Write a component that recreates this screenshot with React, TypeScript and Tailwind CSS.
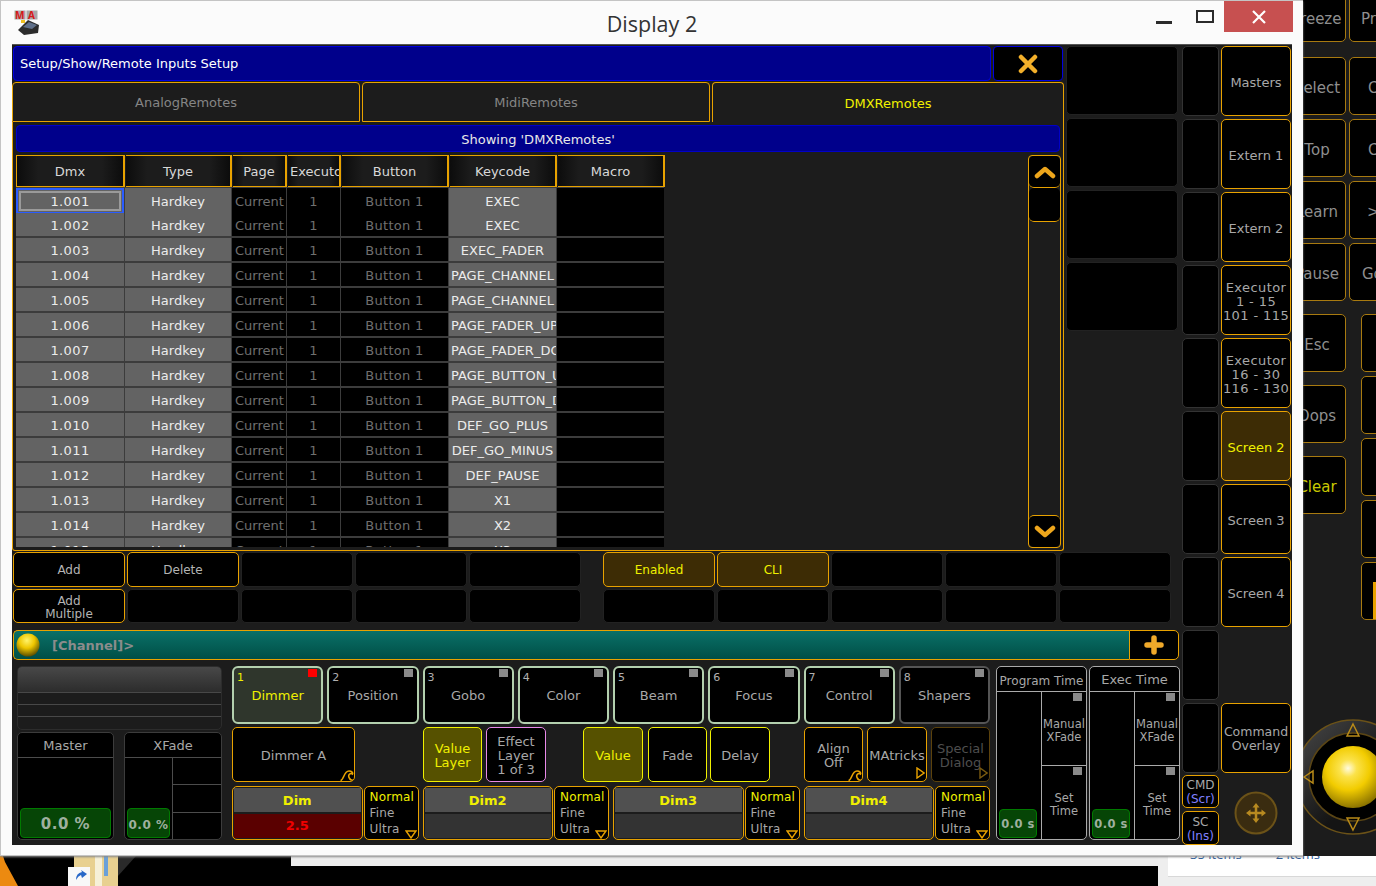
import type { ReactNode } from "react";

const ORANGE = "#e8a200";

const keycodes = [
  "EXEC", "EXEC", "EXEC_FADER", "PAGE_CHANNEL", "PAGE_CHANNEL", "PAGE_FADER_UP", "PAGE_FADER_DOWN",
  "PAGE_BUTTON_UP", "PAGE_BUTTON_DOWN", "DEF_GO_PLUS", "DEF_GO_MINUS", "DEF_PAUSE", "X1", "X2", "X3",
];

const features = ["Dimmer", "Position", "Gobo", "Color", "Beam", "Focus", "Control", "Shapers"];

// Small rounded softkey
function Key({ className = "", children }: { className?: string; children?: ReactNode }) {
  return (
    <div className={`relative flex items-center justify-center text-center leading-[14px] rounded-[5px] bg-black overflow-hidden shrink-0 ${className}`}>
      {children}
    </div>
  );
}

function Wave() {
  return (
    <svg className="absolute right-0 bottom-0" width="14" height="11" viewBox="0 0 14 11" fill="none" stroke={ORANGE} strokeWidth="1.6">
      <path d="M0.5 10.5 C4 10.5 3.5 1 9 1 C12 1 13 3 12.5 4 C10 2.5 8 5 9 7.5 C9.5 9 11 10.5 13.5 10.5" />
    </svg>
  );
}

function TriDown() {
  return (
    <svg className="absolute right-[1px] bottom-[0px]" width="12" height="9" viewBox="0 0 12 9" fill="none" stroke={ORANGE} strokeWidth="1.4">
      <path d="M1 1 H11 L6 8 Z" />
    </svg>
  );
}

function TriRight({ color = ORANGE }: { color?: string }) {
  return (
    <svg className="absolute right-[1px] bottom-[2px]" width="9" height="12" viewBox="0 0 9 12" fill="none" stroke={color} strokeWidth="1.4">
      <path d="M1 1 V11 L8 6 Z" />
    </svg>
  );
}

function Corner({ className = "bg-[#8a8a8a]" }: { className?: string }) {
  return <div className={`absolute right-[4px] top-[1px] w-[9px] h-[8px] ${className}`} />;
}

function TableRow({ index }: { index: number }) {
  const dmx = `1.${String(index + 1).padStart(3, "0")}`;
  const first = index === 0;
  return (
    <div className="grid grid-cols-[108px_106px_54px_53px_107px_107px_107px] gap-x-[1px] h-[25px] pb-[2px] text-[13px]">
      <div className={`flex items-center justify-center pt-[2px] bg-[#636363] text-[#ececec] tracking-[0.4px] ${first ? "border-[2px] border-[#2a5cff] outline-[2px] outline -outline-offset-[5px] outline-[#9a9a9a]" : ""}`}>{dmx}</div>
      <div className="flex items-center justify-center pt-[2px] bg-[#636363] text-[#ececec]">Hardkey</div>
      <div className="flex items-center pt-[2px] pl-[3px] bg-black text-[#6f6f6f] overflow-hidden whitespace-nowrap">Current</div>
      <div className="flex items-center justify-center pt-[2px] bg-black text-[#6f6f6f]">1</div>
      <div className="flex items-center justify-center pt-[2px] bg-black text-[#6f6f6f] tracking-[0.3px]">Button 1</div>
      <div className="flex items-center justify-center pt-[2px] bg-[#636363] text-[#ececec] overflow-hidden whitespace-nowrap">
        <span className={keycodes[index].length > 12 ? "self-center w-full pl-[2px] overflow-hidden" : ""}>{keycodes[index]}</span>
      </div>
      <div className="bg-black" />
    </div>
  );
}

function Header({ children }: { children: ReactNode }) {
  return (
    <div className="flex items-center justify-center h-[32px] pt-[2px] overflow-hidden whitespace-nowrap text-[#d8d8d8] text-[13px] border-t-[1px] border-b-[1px] border-r-[2px] border-[#e8a200] bg-[linear-gradient(90deg,#0c0c0c,#1c1c1c_20%,#1c1c1c_80%,#0c0c0c)]">
      {children}
    </div>
  );
}

function Popup() {
  return (
    <div className="w-[1052px] h-[506px] flex flex-col shrink-0">
      <div className="flex h-[35px] mt-[1px] gap-[2px] mr-[1px] ml-[1px]">
        <div className="flex-1 flex items-center pl-[6px] rounded-[4px] bg-[#00008b] border border-[#0000e0] text-white text-[13px]">
          Setup/Show/Remote Inputs Setup
        </div>
        <div className="w-[70px] flex items-center justify-center rounded-[4px] bg-black border border-[#0000e0]">
          <svg width="20" height="20" viewBox="0 0 20 20" fill="none" stroke="#f3b02a" strokeWidth="4.5" strokeLinecap="round">
            <path d="M3 3 L17 17 M17 3 L3 17" />
          </svg>
        </div>
      </div>
      <div className="flex h-[40px] mt-[1px] gap-[2px] text-[13px]">
        <div className="w-[348px] flex items-center justify-center pt-[2px] rounded-t-[4px] bg-[#1c1c1c] border border-[#e8a200] text-[#858585]">AnalogRemotes</div>
        <div className="w-[348px] flex items-center justify-center pt-[2px] rounded-t-[4px] bg-[#1c1c1c] border border-[#e8a200] text-[#858585]">MidiRemotes</div>
        <div className="flex-1 flex items-center justify-center pt-[2px] rounded-t-[4px] bg-[#1c1c1c] border border-b-0 border-[#e8a200] text-[#f0f000]">DMXRemotes</div>
      </div>
      <div className="flex-1 min-h-0 flex flex-col px-[3px] pt-[3px] border border-t-0 border-[#e8a200] rounded-b-[3px] bg-[#1c1c1c]">
        <div className="h-[27px] shrink-0 flex items-center justify-center pt-[2px] rounded-[4px] bg-[#00008b] border border-[#0000c8] text-[#e8e8e8] text-[13px]">
          Showing 'DMXRemotes'
        </div>
        <div className="flex flex-1 min-h-0 mt-[3px]">
          <div className="w-[648px] flex flex-col">
            <div className="grid grid-cols-[108px_106px_54px_53px_107px_107px_107px] gap-x-[1px] border-l border-[#e8a200]">
              <Header>Dmx</Header>
              <Header>Type</Header>
              <Header>Page</Header>
              <Header><span className="pl-[2px] w-full">Executor</span></Header>
              <Header>Button</Header>
              <Header>Keycode</Header>
              <Header>Macro</Header>
            </div>
            <div className="h-[360px] pt-[1px] overflow-hidden bg-[#3c3c3c]">
              {keycodes.map((_, i) => (
                <TableRow key={i} index={i} />
              ))}
            </div>
          </div>
          <div className="ml-auto -mr-[1px] w-[33px] flex flex-col h-[393px] border border-[#e8a200] rounded-[4px]">
            <Key className="w-full h-[32px] border-b border-[#e8a200]">
              <svg width="22" height="14" viewBox="0 0 22 14" fill="none" stroke="#eda61c" strokeWidth="4.5" strokeLinecap="round" strokeLinejoin="round">
                <path d="M3 11 L11 4 L19 11" />
              </svg>
            </Key>
            <Key className="w-full h-[34px] border-b border-[#e8a200]" />
            <div className="flex-1 bg-[#1c1c1c]" />
            <Key className="w-full h-[32px] border-t border-[#e8a200]">
              <svg width="22" height="14" viewBox="0 0 22 14" fill="none" stroke="#eda61c" strokeWidth="4.5" strokeLinecap="round" strokeLinejoin="round">
                <path d="M3 3 L11 10 L19 3" />
              </svg>
            </Key>
          </div>
        </div>
      </div>
    </div>
  );
}

function KeyRows() {
  const on = "w-[112px] border border-[#e8a200] text-[#b4b4b4] text-[12px]";
  const off = "w-[112px] border border-[#222222]";
  const lit = "w-[112px] border border-[#e8a200] !bg-[#3d2c05] text-[#f0f000] text-[12px]";
  return (
    <div className="ml-[1px] mt-[1px] flex flex-col gap-[2px]">
      <div className="flex gap-[2px] h-[35px]">
        <Key className={on}>Add</Key>
        <Key className={on}>Delete</Key>
        <Key className={off} />
        <Key className={off} />
        <Key className={off} />
        <div className="w-[18px]" />
        <Key className={lit}>Enabled</Key>
        <Key className={lit}>CLI</Key>
        <Key className={off} />
        <Key className={off} />
        <Key className={off} />
      </div>
      <div className="flex gap-[2px] h-[34px]">
        <Key className={`${on} pt-[4px] !leading-[13px]`}>Add<br />Multiple</Key>
        <Key className={off} />
        <Key className={off} />
        <Key className={off} />
        <Key className={off} />
        <div className="w-[18px]" />
        <Key className={off} />
        <Key className={off} />
        <Key className={off} />
        <Key className={off} />
        <Key className={off} />
      </div>
    </div>
  );
}

function CommandLine() {
  return (
    <div className="ml-[1px] mt-[7px] flex h-[30px]">
      <div className="w-[1116px] flex items-center rounded-l-[5px] border-y border-l border-[#e8a200] bg-[linear-gradient(180deg,#0a7068,#004f46)]">
        <svg className="ml-[2px]" width="24" height="24" viewBox="0 0 24 24">
          <defs>
            <radialGradient id="ballSmall" cx="0.45" cy="0.3" r="0.75">
              <stop offset="0" stopColor="#fff36a" />
              <stop offset="0.45" stopColor="#eec600" />
              <stop offset="1" stopColor="#4a3f00" />
            </radialGradient>
          </defs>
          <circle cx="12" cy="12" r="11.5" fill="url(#ballSmall)" />
        </svg>
        <span className="ml-[12px] pt-[2px] text-[13px] font-bold text-[#8c8c8c]">[Channel]&gt;</span>
      </div>
      <Key className="w-[50px] border border-[#e8a200] rounded-l-none">
        <svg width="20" height="20" viewBox="0 0 20 20" fill="none" stroke="#f0a92a" strokeWidth="5.5" strokeLinecap="round">
          <path d="M10 3 V17 M3 10 H17" />
        </svg>
      </Key>
    </div>
  );
}

function GreenValue({ className, children }: { className: string; children: ReactNode }) {
  return (
    <div className={`absolute flex items-center justify-center pt-[3px] rounded-[4px] border border-[#007a00] bg-[#064506] text-[#9fb09f] font-bold tracking-[0.5px] ${className}`}>
      {children}
    </div>
  );
}

function MasterBlock() {
  return (
    <div className="w-[205px] shrink-0 ml-[5px]">
      <div className="h-[64px] rounded-[5px] bg-[#1c1c1c] border border-[#2c2c2c] overflow-hidden">
        <div className="h-[26px] bg-[linear-gradient(180deg,#484848,#2c2c2c)] border-b border-[#484848]" />
        <div className="h-[12px] border-b border-[#484848]" />
        <div className="h-[12px] border-b border-[#484848]" />
      </div>
      <div className="flex gap-[10px] mt-[2px] h-[108px]">
        <div className="w-[97px] flex flex-col rounded-[5px] border border-[#3c3c3c] bg-black overflow-hidden">
          <div className="h-[25px] flex items-center justify-center pt-[2px] border-b border-[#4c4c4c] text-[#a8a8a8] text-[13px]">Master</div>
          <div className="relative flex-1">
            <GreenValue className="left-[2px] right-[2px] bottom-[1px] h-[30px] text-[15px]">0.0 %</GreenValue>
          </div>
        </div>
        <div className="w-[98px] flex flex-col rounded-[5px] border border-[#3c3c3c] bg-black overflow-hidden">
          <div className="h-[25px] flex items-center justify-center pt-[2px] border-b border-[#4c4c4c] text-[#a8a8a8] text-[13px]">XFade</div>
          <div className="flex flex-1">
            <div className="relative w-[48px] border-r border-[#4c4c4c]">
              <GreenValue className="left-[2px] right-[2px] bottom-[1px] h-[30px] text-[12px]">0.0 %</GreenValue>
            </div>
            <div className="flex-1 flex flex-col">
              <div className="flex-1 border-b border-[#4c4c4c]" />
              <div className="flex-1 border-b border-[#4c4c4c]" />
              <div className="flex-1" />
            </div>
          </div>
        </div>
      </div>
    </div>
  );
}

function FeatureButton({ n, label, selected }: { n: number; label: string; selected: boolean }) {
  return (
    <Key className={`h-[58px] border-[2px] ${n === 8 ? "border-[#555555]" : "border-[#b3d0ae]"} ${selected ? "!bg-[#2f362c] text-[#f0f000]" : "text-[#a8a8a8]"} text-[13px] rounded-[6px]`}>
      <span className={`absolute left-[3px] top-[3px] text-[11px] ${selected ? "text-[#f0f000]" : "text-[#b0b0b0]"}`}>{n}</span>
      <Corner className={selected ? "bg-[#ff0000]" : "bg-[#8a8a8a]"} />
      <span className="mt-[1px]">{label}</span>
    </Key>
  );
}

function Encoder({ label, value }: { label: string; value?: string }) {
  return (
    <div className="flex gap-[1px]">
      <div className="flex-1 flex flex-col rounded-[5px] border border-[#e8a200] bg-[#1c1c1c] p-[1px] overflow-hidden">
        <div className="h-[24px] flex items-center justify-center pt-[2px] bg-[#505050] text-[#f0f000] font-bold text-[13px]">{label}</div>
        <div className={`flex-1 mt-[2px] flex items-center justify-center font-bold text-[13px] text-[#f00000] ${value ? "bg-[#5a0000]" : "bg-[#333333]"}`}>{value}</div>
      </div>
      <Key className="w-[55px] h-[54px] border border-[#e8a200] !justify-start pl-[5px] text-[12px] tracking-[0.2px] leading-[16px] text-left">
        <div className="text-[#a8a8a8]">
          <div className="text-[#f0f000]">Normal</div>
          <div>Fine</div>
          <div>Ultra</div>
        </div>
        <TriDown />
      </Key>
    </div>
  );
}

function Features() {
  const yel = "h-[55px] pt-[2px] border-[1.5px] border-[#f0f000] text-[#a8a8a8] text-[13px]";
  const org = "h-[55px] pt-[2px] border border-[#e8a200] text-[#a8a8a8] text-[13px]";
  return (
    <div className="w-[758px] shrink-0 ml-[10px]">
      <div className="grid grid-cols-8 gap-[4px]">
        {features.map((f, i) => (
          <FeatureButton key={f} n={i + 1} label={f} selected={i === 0} />
        ))}
      </div>
      <div className="flex mt-[3px]">
        <Key className="w-[123px] h-[55px] pt-[2px] border border-[#e8a200] text-[#a8a8a8] text-[13px]">
          Dimmer A
          <Wave />
        </Key>
        <Key className={`ml-[68px] w-[59px] ${yel} !bg-[#565100] !text-[#f0f000]`}>Value<br />Layer</Key>
        <Key className="ml-[4px] w-[60px] h-[55px] pt-[2px] border-[1.5px] border-[#e889e8] text-[#a8a8a8] text-[13px]">Effect<br />Layer<br />1 of 3</Key>
        <Key className={`ml-[37px] w-[60px] ${yel} !bg-[#565100] !text-[#f0f000]`}>Value</Key>
        <Key className={`ml-[5px] w-[59px] ${yel}`}>Fade</Key>
        <Key className={`ml-[3px] w-[60px] ${yel}`}>Delay</Key>
        <Key className={`ml-[34px] w-[59px] ${org}`}>Align<br />Off<Wave /></Key>
        <Key className={`ml-[4px] w-[60px] ${org}`}>MAtricks<TriRight /></Key>
        <Key className="ml-[4px] w-[59px] h-[55px] pt-[2px] border border-[#5c420c] text-[#4e4e4e] text-[13px]">Special<br />Dialog<TriRight color="#7a5a10" /></Key>
      </div>
      <div className="grid grid-cols-4 gap-[4px] mt-[4px]">
        <Encoder label="Dim" value="2.5" />
        <Encoder label="Dim2" />
        <Encoder label="Dim3" />
        <Encoder label="Dim4" />
      </div>
    </div>
  );
}

function TimePanel({ title, small }: { title: string; small?: boolean }) {
  return (
    <div className="w-[91px] h-[174px] flex flex-col rounded-[5px] border border-[#aaaaaa] bg-black overflow-hidden text-[#a8a8a8]">
      <div className={`h-[25px] shrink-0 flex items-center justify-center border-b border-[#aaaaaa] whitespace-nowrap ${small ? "text-[12px] pt-[3px]" : "text-[13px] pt-[2px]"}`}>{title}</div>
      <div className="flex flex-1">
        <div className="relative w-[45px] border-r border-[#aaaaaa]">
          <GreenValue className="left-[2px] right-[4px] bottom-[1px] h-[29px] text-[11.5px]">0.0 s</GreenValue>
        </div>
        <div className="flex-1 flex flex-col text-[11.5px] leading-[13px] text-center">
          <div className="relative h-[74px] flex items-center justify-center border-b border-[#aaaaaa] pt-[5px]">
            <Corner />
            <span>Manual<br />XFade</span>
          </div>
          <div className="relative flex-1 flex items-center justify-center pt-[4px]">
            <Corner />
            <span>Set<br />Time</span>
          </div>
        </div>
      </div>
    </div>
  );
}

function RightColumns() {
  const views = ["Masters", "Extern 1", "Extern 2", "Executor\n1 - 15\n101 - 115", "Executor\n16 - 30\n116 - 130", "Screen 2", "Screen 3", "Screen 4"];
  return (
    <div className="flex gap-[2px] ml-[2px] pt-[1px]">
      <div className="w-[37px] flex flex-col gap-[3px]">
        {Array.from({ length: 10 }).map((_, i) => (
          <Key key={i} className="w-full h-[70px] border border-[#333333]" />
        ))}
        <Key className="w-full h-[33px] -mt-[1px] border border-[#e8a200] text-[12px] text-[#a8a8a8]">
          <span>CMD<br /><span className="text-[#8080ff]">(Scr)</span></span>
        </Key>
        <Key className="w-full h-[34px] pt-[2px] border border-[#e8a200] text-[12px] text-[#a8a8a8]">
          <span>SC<br /><span className="text-[#8080ff]">(Ins)</span></span>
        </Key>
      </div>
      <div className="w-[70px] flex flex-col gap-[3px]">
        {views.map((v) => (
          <Key
            key={v}
            className={`w-full h-[70px] pt-[4px] border border-[#e8a200] text-[13px] whitespace-pre ${v === "Screen 2" ? "!bg-[#3d2c05] text-[#f0f000]" : "text-[#a8a8a8]"} ${v.includes("- 1") ? "tracking-[0.4px]" : ""}`}
          >
            {v}
          </Key>
        ))}
        <div className="h-[70px]" />
        <Key className="w-full h-[70px] pt-[2px] border border-[#e8a200] text-[12.5px] text-[#a8a8a8]">Command<br />Overlay</Key>
        <div className="flex justify-center pt-[15px]">
          <svg width="44" height="44" viewBox="0 0 44 44" fill="none">
            <circle cx="22" cy="22" r="20.5" fill="#3a2c10" stroke="#6b5218" strokeWidth="2" />
            <path d="M22 15 V29 M15 22 H29" stroke="#b88a20" strokeWidth="2.5" />
            <path d="M22 12 L25.5 16.5 H18.5 Z M22 32 L25.5 27.5 H18.5 Z M12 22 L16.5 18.5 V25.5 Z M32 22 L27.5 18.5 V25.5 Z" fill="#b88a20" />
          </svg>
        </div>
      </div>
    </div>
  );
}

function MainWindow() {
  return (
    <div className="absolute left-0 top-0 w-[1303px] h-[856px] flex flex-col bg-[#fbfbfb] border-t border-l border-[#c4c4c4] border-b-[1px] shadow-[0_1px_2px_#888888]">
      <div className="relative h-[43px] shrink-0 flex items-center justify-center">
        <svg className="absolute left-[13px] top-[9px]" width="26" height="26" viewBox="0 0 26 26">
          <rect x="0.5" y="0.5" width="11" height="9" fill="#a8a8a8" />
          <rect x="12.5" y="0.5" width="11" height="9" fill="#a8a8a8" />
          <text x="1" y="9" fontSize="10" fontWeight="bold" fill="#d81818">M</text>
          <text x="14" y="9" fontSize="10" fontWeight="bold" fill="#d81818">A</text>
          <path d="M4 20 L14 10 L25 15 L24 23 L10 25 Z" fill="#2c2c2c" />
          <path d="M9 17 L15 12 L23 15 L18 19 Z" fill="#60708a" />
          <rect x="7" y="10" width="4" height="3" fill="#f0c020" />
        </svg>
        <span className="text-[21.5px] pt-[4px] text-[#333333] [font-family:'Open_Sans',sans-serif]">Display 2</span>
        <div className="absolute left-[1155px] top-[20px] w-[16px] h-[3px] bg-[#2b2b2b]" />
        <div className="absolute left-[1195px] top-[9px] w-[18px] h-[13px] border-[2px] border-[#2b2b2b]" />
        <div className="absolute left-[1223px] top-0 w-[69px] h-[31px] flex items-center justify-center bg-[#c75050]">
          <svg width="14" height="14" viewBox="0 0 14 14" stroke="white" strokeWidth="2.2"><path d="M1 1 L13 13 M13 1 L1 13" /></svg>
        </div>
      </div>
      <div className="ml-[11px] w-[1280px] h-[801px] flex bg-[#1c1c1c] border-t border-[#555555] overflow-hidden text-[13px] [font-family:'DejaVu_Sans',sans-serif]">
        <div className="w-[1168px] shrink-0 flex flex-col">
          <div className="flex">
            <Popup />
            <div className="ml-[2px] w-[112px] pt-[1px] flex flex-col gap-[3px]">
              {[0, 1, 2, 3].map((i) => (
                <Key key={i} className="w-full h-[69px] border border-[#222222]" />
              ))}
            </div>
          </div>
          <KeyRows />
          <CommandLine />
          <div className="flex mt-[6px]">
            <MasterBlock />
            <Features />
            <div className="flex gap-[2px] ml-[6px]">
              <TimePanel title="Program Time" small />
              <TimePanel title="Exec Time" />
            </div>
          </div>
        </div>
        <RightColumns />
      </div>
    </div>
  );
}

function BackWindow() {
  const colA = ["Freeze", "Select", "Top", "Learn", "Pause"];
  const colB = [
    { t: "Prev", c: "pl-[11px]" },
    { t: "Cue", c: "pl-[18px]" },
    { t: "Cue", c: "pl-[18px]" },
    { t: ">>>", c: "pl-[17px]" },
    { t: "Go -", c: "pl-[12px]" },
  ];
  const colC = ["Esc", "Oops", "Clear"];
  const btn = "w-[58px] h-[58px] shrink-0 flex items-center rounded-[5px] bg-black border-[1.5px] border-[#a87a10] text-[#8f8f8f] text-[15px]";
  return (
    <div className="absolute left-[1240px] top-0 w-[136px] h-[856px] bg-[#1c1c1c] overflow-hidden [font-family:'DejaVu_Sans',sans-serif]">
      <div className="flex gap-[3px] -mt-[16px]">
        <div className="flex flex-col gap-[4px] ml-[48px]">
          {colA.map((t, i) => (
            <div key={t} className={`${btn} justify-center ${i === 0 ? "pt-[12px]" : "pt-[4px]"} ${i === 1 ? "mt-[11px]" : ""}`}>{t}</div>
          ))}
        </div>
        <div className="flex flex-col gap-[4px]">
          {colB.map((b, i) => (
            <div key={i} className={`${btn} ${b.c} ${i === 0 ? "pt-[12px]" : "pt-[4px]"} ${i === 1 ? "mt-[11px]" : ""}`}>{b.t}</div>
          ))}
        </div>
      </div>
      <div className="flex gap-[15px] mt-[13px]">
        <div className="flex flex-col gap-[13px] ml-[48px]">
          {colC.map((t) => (
            <div key={t} className={`${btn} justify-center pt-[4px] ${t === "Clear" ? "!text-[#c8c800]" : ""}`}>{t}</div>
          ))}
        </div>
        <div className="flex flex-col gap-[4px]">
          {[0, 1, 2, 3, 4].map((i) => (
            <div key={i} className={btn} />
          ))}
        </div>
      </div>
      <div className="absolute left-[133px] top-[582px] w-[3px] h-[37px] bg-[#e8a200]" />
      <svg className="absolute left-[50px] top-[715px]" width="86" height="124" viewBox="0 0 86 124" fill="none">
        <defs>
          <radialGradient id="ballBig" cx="0.42" cy="0.36" r="0.7">
            <stop offset="0" stopColor="#fffbe0" />
            <stop offset="0.2" stopColor="#fbe24a" />
            <stop offset="0.5" stopColor="#f2cc00" />
            <stop offset="1" stopColor="#7a6400" />
          </radialGradient>
          <linearGradient id="ringFill" x1="0" y1="0" x2="1" y2="1">
            <stop offset="0" stopColor="#484848" />
            <stop offset="0.6" stopColor="#141414" />
          </linearGradient>
        </defs>
        <circle cx="63" cy="62" r="57" fill="url(#ringFill)" stroke="#6b5218" strokeWidth="1.5" />
        <circle cx="63" cy="62" r="44" fill="#000000" stroke="#5a4515" strokeWidth="1.5" />
        <circle cx="63" cy="62" r="31" fill="url(#ballBig)" />
        <path d="M63 9 L69 21 H57 Z M63 115 L69 103 H57 Z M14 62 L23 56 V68 Z" stroke="#b88a18" strokeWidth="1.5" />
      </svg>
    </div>
  );
}

function Desktop() {
  return (
    <>
      <div className="absolute left-[291px] top-[856px] w-[867px] h-[10px] bg-[#ededed]" />
      <div className="absolute left-[1158px] top-[856px] w-[218px] h-[30px] bg-[#eeeeee]">
        <div className="ml-[10px] h-[21px] bg-white border-b border-[#d8d8d8] overflow-hidden">
          <div className="flex gap-[34px] pl-[22px] -mt-[11px] text-[13px] text-[#2a5a9a] whitespace-nowrap [font-family:'Open_Sans',sans-serif]">
            <span>35 items</span>
            <span>2 items</span>
          </div>
        </div>
      </div>
      <svg className="absolute left-0 top-[856px]" width="140" height="30" viewBox="0 0 140 30">
        <path d="M0 0 H3 L5 6 L18 30 H0 Z" fill="#ec8a10" />
        <path d="M74 0 H118 V30 H74 Z" fill="#e8d090" />
        <rect x="95" y="0" width="7" height="30" fill="#f6f0d8" />
        <rect x="104" y="0" width="4" height="20" fill="#6aa0d8" />
        <path d="M118 0 L136 0 L118 20 Z" fill="#2a2a2a" />
        <rect x="68" y="11" width="22" height="19" fill="#f8f8f8" />
        <path d="M76 24 Q76 17 82 16 L81 14 L87 18 L82 22 L81 19 Q78 20 76 24 Z" fill="#2868c8" />
      </svg>
    </>
  );
}

export default function App() {
  return (
    <div className="relative w-[1376px] h-[886px] bg-black overflow-hidden">
      <Desktop />
      <BackWindow />
      <MainWindow />
    </div>
  );
}
